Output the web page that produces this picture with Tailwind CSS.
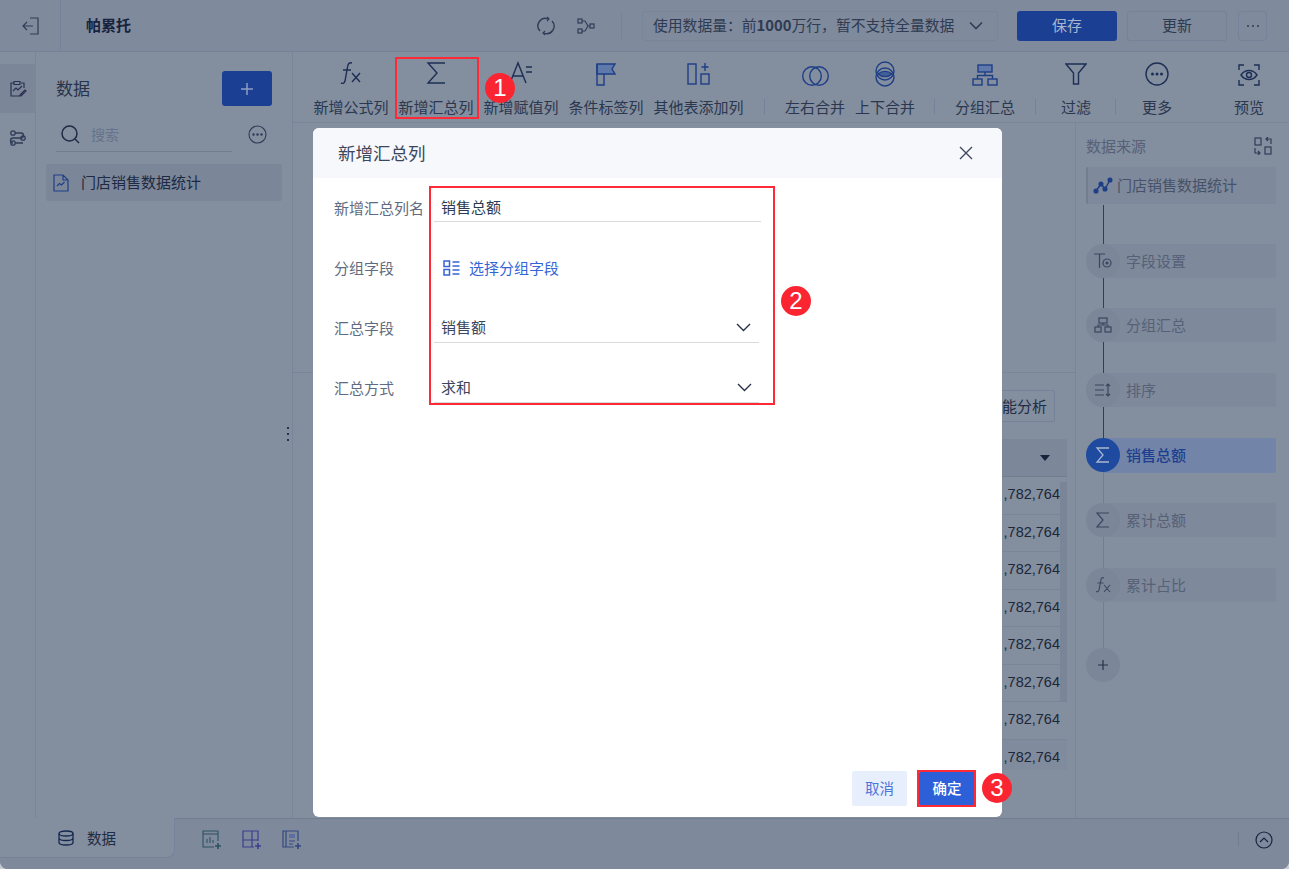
<!DOCTYPE html>
<html lang="zh">
<head>
<meta charset="utf-8">
<script src="https://cdn.jsdelivr.net/npm/@tailwindcss/browser@4"></script>
</head>
<body class="bg-[#c5cad3]">
<div class="relative w-[1289px] h-[869px] overflow-hidden rounded-b-[8px] bg-[#838e9f] font-['Noto_Sans_CJK_SC','Liberation_Sans',sans-serif] text-[15px] text-[#2c3a52] flex flex-col">

  <!-- header -->
  <header class="h-[52px] shrink-0 flex items-center bg-[#7f8a9c] border-b border-[#76819a]">
    <div class="w-[61px] h-full flex items-center justify-center border-r border-[#76819a] pl-[1px]">
      <svg width="18" height="20" viewBox="0 0 18 20" fill="none" stroke="#2f3d57" stroke-width="1.2"><path d="M8 2h8v16H8M11 10H1M5 6l-4 4 4 4"/></svg>
    </div>
    <div class="ml-[25px] w-[45px] text-[15px] font-bold text-[#17233d] whitespace-nowrap">帕累托</div>
    <svg class="ml-[405px]" width="20" height="20" viewBox="0 0 20 20" fill="none" stroke="#2f3d57" stroke-width="1.4"><path d="M4 15A7.5 7.5 0 0 1 12 2.8M16 5a7.5 7.5 0 0 1-8 12.2"/><path d="M11 1l2 2-2 2M9 15l-2 2 2 2" stroke-width="1.2"/></svg>
    <svg class="ml-[21px]" width="18" height="18" viewBox="0 0 18 18" fill="none" stroke="#2f3d57" stroke-width="1.2"><rect x="1" y="2" width="4" height="4"/><rect x="1" y="12" width="4" height="4"/><rect x="13" y="7" width="4" height="4"/><path d="M5 4h3l3 5h2M5 14h3l3-5"/></svg>
    <div class="ml-[26px] w-px h-[26px] bg-[#76819a]"></div>
    <div class="ml-[20px] w-[356px] h-[30px] flex items-center justify-between pl-[10px] pr-[13px] rounded-[3px] border border-[#7a859a] text-[14.800px] text-[#2f3b52] whitespace-nowrap">
      <span>使用数据量：前<b class="font-bold">1000</b>万行，暂不支持全量数据</span>
      <svg width="16" height="10" viewBox="0 0 16 10" fill="none" stroke="#2f3d57" stroke-width="1.6"><path d="M2 1.500l6 6 6-6"/></svg>
    </div>
    <div class="ml-[19px] w-[100px] h-[30px] flex items-center justify-center rounded-[3px] bg-[#1b3f93] text-[#a9b6cf]">保存</div>
    <div class="ml-[10px] w-[100px] h-[30px] flex items-center justify-center rounded-[3px] border border-[#76819a] text-[#2c3a52]">更新</div>
    <div class="ml-[11px] w-[29px] h-[30px] flex items-center justify-center rounded-[4px] border border-[#76819a] text-[#2f3d57]">
      <svg width="16" height="4" viewBox="0 0 16 4" fill="#2f3d57"><circle cx="3" cy="2" r="1"/><circle cx="8" cy="2" r="1"/><circle cx="13" cy="2" r="1"/></svg>
    </div>
  </header>

  <!-- middle -->
  <div class="h-[766px] shrink-0 flex">
    <!-- rail -->
    <nav class="w-[36px] shrink-0 border-r border-[#7a859a] pt-[12px]">
      <div class="h-[49px] flex items-center justify-center bg-[#7b8698]">
        <svg width="18" height="18" viewBox="0 0 18 18" fill="none" stroke="#2b2f52" stroke-width="1.2"><path d="M5 3H2v13h9M12 3h3v5M5 1.500h6v3H5zM4 11l3-3 2 2 4-4M11 15l5-5 1 1-5 5h-1z"/></svg>
      </div>
      <div class="h-[50px] flex items-center justify-center">
        <svg width="18" height="18" viewBox="0 0 18 18" fill="none" stroke="#2f3d57" stroke-width="1.3"><circle cx="4" cy="4" r="2.2"/><circle cx="14" cy="9" r="2.2"/><circle cx="4" cy="14" r="2.2"/><path d="M6 4h6a2.500 2.500 0 0 1 0 5H4a2.500 2.500 0 0 0 0 5M6.200 14H14"/></svg>
      </div>
    </nav>
    <!-- data panel -->
    <aside class="relative w-[257px] shrink-0 border-r border-[#7a859a]">
      <div class="flex items-center justify-between pl-[20px] pr-[20px] pt-[19px] h-[54px]">
        <span class="text-[17px] text-[#273349] -translate-y-px">数据</span>
        <div class="w-[50px] h-[35px] rounded-[3px] bg-[#1b3f93] flex items-center justify-center">
          <svg width="14" height="14" viewBox="0 0 14 14" stroke="#8f9fc2" stroke-width="1.5"><path d="M7 1v12M1 7h12"/></svg>
        </div>
      </div>
      <div class="flex items-center pl-[24px] mt-[14px] h-[28px]">
        <svg width="20" height="20" viewBox="0 0 20 20" fill="none" stroke="#1f2c44" stroke-width="1.5"><circle cx="9.500" cy="9.500" r="7.500"/><path d="M15 15l4 4"/></svg>
        <span class="ml-[11px] text-[14px] text-[#67738a]">搜索</span>
        <svg class="ml-[129px]" width="19" height="19" viewBox="0 0 19 19" fill="none" stroke="#2f3d57" stroke-width="1.1"><circle cx="9.500" cy="9.500" r="8.500"/><circle cx="5.500" cy="9.500" r=".7" fill="#2f3d57"/><circle cx="9.500" cy="9.500" r=".7" fill="#2f3d57"/><circle cx="13.500" cy="9.500" r=".7" fill="#2f3d57"/></svg>
      </div>
      <div class="ml-[20px] mt-[3px] w-[176px] h-px bg-[#727d90]"></div>
      <div class="ml-[10px] mt-[12px] w-[236px] h-[37px] rounded-[2px] bg-[#7b8698] flex items-center pl-[7px]">
        <svg width="16" height="18" viewBox="0 0 16 18" fill="none" stroke="#1e3f86" stroke-width="1.2"><path d="M1 1h9l5 5v11H1zM10 1v5h5"/><path d="M4 12l2.500-2.500 2 1.500 3-3"/></svg>
        <span class="ml-[12px] text-[#1c2a44]">门店销售数据统计</span>
      </div>
      <div class="absolute right-[3px] top-[375px] flex flex-col gap-[4px]">
        <i class="block w-[2px] h-[2px] bg-[#26334b]"></i><i class="block w-[2px] h-[2px] bg-[#26334b]"></i><i class="block w-[2px] h-[2px] bg-[#26334b]"></i>
      </div>
    </aside>
    <!-- main -->
    <main class="flex-1 flex flex-col min-w-0">
      <div class="h-[71px] shrink-0 border-b border-[#7a859a] flex items-start pl-[21px] whitespace-nowrap text-[#2a374e]">
        <div class="w-[74px] flex flex-col items-center mr-[11px]"><div class="h-[34px] flex items-end justify-center"><svg width="26" height="26" viewBox="0 0 26 26" fill="none" stroke="#1e2f55" stroke-width="1.4"><path d="M14 3c-3-1-4 1-4.500 4L7 21c-.5 2-2 3-4 2M5 10h8M14 13l8 9M22 13l-8 9"/></svg></div><span class="mt-[10px] leading-[22px]">新增公式列</span></div>
        <div class="w-[74px] flex flex-col items-center mr-[11px]"><div class="h-[34px] flex items-end justify-center"><svg width="22" height="26" viewBox="0 0 22 26" fill="none" stroke="#1e2f55" stroke-width="1.4"><path d="M20 3H3l9 10-9 10h17"/></svg></div><span class="mt-[10px] leading-[22px]">新增汇总列</span></div>
        <div class="w-[74px] flex flex-col items-center mr-[11px]"><div class="h-[34px] flex items-end justify-center"><svg width="26" height="26" viewBox="0 0 26 26" fill="none" stroke="#1e2f55" stroke-width="1.4"><path d="M2 23L10 3l8 20M5 16h10M18 7h6M18 12h6"/></svg></div><span class="mt-[10px] leading-[22px]">新增赋值列</span></div>
        <div class="w-[74px] flex flex-col items-center mr-[11px]"><div class="h-[34px] flex items-end justify-center"><svg width="24" height="24" viewBox="0 0 24 24" fill="none" stroke="#1e3f86" stroke-width="1.4"><path d="M3 2h18l-3 5 3 5H3z" fill="#5f79ab"/><path d="M3 2v21h7V12"/></svg></div><span class="mt-[10px] leading-[22px]">条件标签列</span></div>
        <div class="w-[89px] flex flex-col items-center"><div class="h-[34px] flex items-end justify-center"><svg width="24" height="24" viewBox="0 0 24 24" fill="none" stroke="#1e3f86" stroke-width="1.4"><rect x="1" y="2" width="8" height="20"/><rect x="14" y="12" width="8" height="10"/><path d="M18 1v8M14.500 5h7"/></svg></div><span class="mt-[10px] leading-[22px]">其他表添加列</span></div>
        <div class="ml-[21px] mt-[47px] w-px h-[16px] bg-[#76819a]"></div>
        <div class="ml-[20px] w-[60px] flex flex-col items-center"><div class="h-[34px] flex items-end justify-center"><svg class="mb-[-1px]" width="27" height="22" viewBox="0 0 27 22" fill="none" stroke="#1e3f86" stroke-width="1.4"><circle cx="10" cy="11" r="9.300"/><circle cx="17" cy="11" r="9.300"/></svg></div><span class="mt-[10px] leading-[22px]">左右合并</span></div>
        <div class="ml-[10px] w-[60px] flex flex-col items-center"><div class="h-[34px] flex items-end justify-center"><svg class="mb-[-1px]" width="20" height="26" viewBox="0 0 20 26" fill="none" stroke="#1e3f86" stroke-width="1.4"><circle cx="10" cy="10" r="9"/><circle cx="10" cy="16" r="9"/><path d="M3 13c4-3.500 10-3.500 14 0-4 3.500-10 3.500-14 0z" fill="#456099"/></svg></div><span class="mt-[10px] leading-[22px]">上下合并</span></div>
        <div class="ml-[19px] mt-[47px] w-px h-[16px] bg-[#76819a]"></div>
        <div class="ml-[20px] w-[60px] flex flex-col items-center"><div class="h-[34px] flex items-end justify-center"><svg width="26" height="22" viewBox="0 0 26 22" fill="none" stroke="#1e3f86" stroke-width="1.4"><rect x="6" y="1" width="14" height="7" fill="#5f79ab"/><rect x="1" y="15" width="9" height="6"/><rect x="16" y="15" width="9" height="6"/><path d="M13 8v3.500M5.500 15v-3.500h15V15"/></svg></div><span class="mt-[10px] leading-[22px]">分组汇总</span></div>
        <div class="ml-[20px] mt-[47px] w-px h-[16px] bg-[#76819a]"></div>
        <div class="ml-[25px] w-[30px] flex flex-col items-center"><div class="h-[34px] flex items-end justify-center"><svg width="22" height="24" viewBox="0 0 22 24" fill="none" stroke="#1e2f55" stroke-width="1.4"><path d="M1 2h20l-7.500 9v11h-5V11z"/></svg></div><span class="mt-[10px] leading-[22px]">过滤</span></div>
        <div class="ml-[24px] mt-[47px] w-px h-[16px] bg-[#76819a]"></div>
        <div class="ml-[26px] w-[30px] flex flex-col items-center"><div class="h-[34px] flex items-end justify-center"><svg width="24" height="24" viewBox="0 0 24 24" fill="none" stroke="#1e2f55" stroke-width="1.4"><circle cx="12" cy="12" r="11"/><circle cx="7.500" cy="12" r=".8" fill="#1e2f55"/><circle cx="12" cy="12" r=".8" fill="#1e2f55"/><circle cx="16.500" cy="12" r=".8" fill="#1e2f55"/></svg></div><span class="mt-[10px] leading-[22px]">更多</span></div>
        <div class="ml-[62px] w-[30px] flex flex-col items-center"><div class="h-[34px] flex items-end justify-center"><svg width="22" height="22" viewBox="0 0 22 22" fill="none" stroke="#1e2f55" stroke-width="1.4"><path d="M1 6V1h5M16 1h5v5M21 16v5h-5M6 21H1v-5M3 11c4-6 12-6 16 0-4 6-12 6-16 0z"/><circle cx="11" cy="11" r="2.500"/></svg></div><span class="mt-[10px] leading-[22px]">预览</span></div>
      </div>

      <div class="flex-1 flex min-h-0">
        <!-- centre, mostly behind the dialog -->
        <section class="w-[783px] shrink-0 border-r border-[#7a859a] flex flex-col">
          <div class="h-[250px] shrink-0 border-b border-[#7a859a]"></div>
          <div class="h-[66px] shrink-0 flex items-start justify-end pr-[20px] pt-[17px]">
            <div class="w-[90px] h-[32px] flex items-center justify-end pr-[7px] rounded-[2px] border border-[#76819a] text-[#1f2c44]">智能分析</div>
          </div>
          <div class="ml-[100px] mr-[8px] text-[14.500px] font-['Liberation_Sans',sans-serif] text-[#1c2738]">
            <div class="h-[38px] bg-[#7c8799] flex items-center justify-end pr-[17px] border-b border-[#727d90]">
              <svg width="10" height="6" viewBox="0 0 10 6" fill="#17233d"><path d="M0 0h10L5 6z"/></svg>
            </div>
            <div class="relative">
              <div class="h-[37.500px] flex items-center justify-end pr-[7px] border-b border-[#7a859a]">,782,764</div>
              <div class="h-[37.500px] flex items-center justify-end pr-[7px] border-b border-[#7a859a]">,782,764</div>
              <div class="h-[37.500px] flex items-center justify-end pr-[7px] border-b border-[#7a859a]">,782,764</div>
              <div class="h-[37.500px] flex items-center justify-end pr-[7px] border-b border-[#7a859a]">,782,764</div>
              <div class="h-[37.500px] flex items-center justify-end pr-[7px] border-b border-[#7a859a]">,782,764</div>
              <div class="h-[37.500px] flex items-center justify-end pr-[7px] border-b border-[#7a859a]">,782,764</div>
              <div class="h-[37.500px] flex items-center justify-end pr-[7px] border-b border-[#7a859a]">,782,764</div>
              <div class="h-[30px] flex items-center justify-end pr-[7px] pt-[7px] bg-[#808b9d]">,782,764</div>
              <div class="absolute right-0 top-[5px] w-[7px] h-[220px] bg-[#7a8598]"></div>
            </div>
          </div>
        </section>

        <!-- pipeline -->
        <aside class="relative flex-1 pl-[10px] pr-[13px]">
          <div class="absolute left-[27px] top-[82px] w-px h-[235px] bg-[#1e3f86]"></div>
          <div class="absolute left-[27px] top-[350px] w-px h-[190px] bg-[#727d90]"></div>
          <div class="h-[37px] flex items-end justify-between pb-[3px] pr-[4px] text-[#566177]">
            <span>数据来源</span>
            <svg class="mb-[2px]" width="18" height="18" viewBox="0 0 18 18" fill="none" stroke="#2f3d57" stroke-width="1.200"><rect x="1" y="1" width="6" height="7"/><rect x="11" y="10" width="6" height="7"/><path d="M1 11v5h5M4 14l2 2-2 2M17 7V2h-5M14 4l-2-2 2-2"/></svg>
          </div>
          <div class="relative mt-[7px] h-[37px] rounded-[2px] bg-[#7e899b] border-l-2 border-[#727d90] flex items-center pl-[5px] text-[#465269]">
            <svg width="20" height="18" viewBox="0 0 20 18" fill="#1e3f86" stroke="#1e3f86" stroke-width="1.500"><path d="M3 14l5-7 4 5 5-9" fill="none"/><circle cx="3" cy="14" r="1.800"/><circle cx="8" cy="7" r="1.800"/><circle cx="12" cy="12" r="1.800"/><circle cx="17" cy="3" r="1.800"/></svg>
            <span class="ml-[4px]">门店销售数据统计</span>
          </div>
          <div class="relative mt-[40px] h-[34px] ml-[17px] rounded-r-[2px] bg-[#7e899b] flex items-center pl-[23px] text-[#566177]">
            <span class="absolute left-[-17px] top-[0px] w-[34px] h-[34px] rounded-full bg-[#7b8698] flex items-center justify-center">
              <svg width="20" height="18" viewBox="0 0 20 18" fill="none" stroke="#3a4660" stroke-width="1.200"><path d="M1 2h11M6.500 2v14"/><circle cx="14" cy="11" r="4"/><circle cx="14" cy="11" r="1" fill="#3a4660"/></svg>
            </span>字段设置
          </div>
          <div class="relative mt-[30px] h-[34px] ml-[17px] rounded-r-[2px] bg-[#7e899b] flex items-center pl-[23px] text-[#566177]">
            <span class="absolute left-[-17px] top-[0px] w-[34px] h-[34px] rounded-full bg-[#7b8698] flex items-center justify-center">
              <svg width="18" height="16" viewBox="0 0 18 16" fill="none" stroke="#3a4660" stroke-width="1.200"><rect x="5" y="1" width="8" height="5"/><rect x="1" y="10" width="6" height="5"/><rect x="11" y="10" width="6" height="5"/><path d="M9 6v2M4 10V8h10v2"/></svg>
            </span>分组汇总
          </div>
          <div class="relative mt-[31px] h-[34px] ml-[17px] rounded-r-[2px] bg-[#7e899b] flex items-center pl-[23px] text-[#566177]">
            <span class="absolute left-[-17px] top-[0px] w-[34px] h-[34px] rounded-full bg-[#7b8698] flex items-center justify-center">
              <svg width="18" height="14" viewBox="0 0 18 14" fill="none" stroke="#3a4660" stroke-width="1.200"><path d="M1 2h9M1 7h9M1 12h9M14 1v12M12 3l2-2 2 2M12 11l2 2 2-2"/></svg>
            </span>排序
          </div>
          <div class="relative mt-[31px] h-[35px] ml-[17px] rounded-r-[2px] bg-[#7285a8] flex items-center pl-[23px] font-medium text-[#1e3f8f]">
            <span class="absolute left-[-17px] top-[0px] w-[34px] h-[34px] rounded-full bg-[#1e4a9f] flex items-center justify-center">
              <svg width="16" height="18" viewBox="0 0 16 18" fill="none" stroke="#aab6cf" stroke-width="1.300"><path d="M14 2H2l6 7-6 7h12"/></svg>
            </span>销售总额
          </div>
          <div class="relative mt-[30px] h-[34px] ml-[17px] rounded-r-[2px] bg-[#7e899b] flex items-center pl-[23px] text-[#566177]">
            <span class="absolute left-[-17px] top-[0px] w-[34px] h-[34px] rounded-full bg-[#7b8698] flex items-center justify-center">
              <svg width="16" height="18" viewBox="0 0 16 18" fill="none" stroke="#3a4660" stroke-width="1.200"><path d="M14 2H2l6 7-6 7h12"/></svg>
            </span>累计总额
          </div>
          <div class="relative mt-[31px] h-[34px] ml-[17px] rounded-r-[2px] bg-[#7e899b] flex items-center pl-[23px] text-[#566177]">
            <span class="absolute left-[-17px] top-[0px] w-[34px] h-[34px] rounded-full bg-[#7b8698] flex items-center justify-center">
              <svg width="18" height="18" viewBox="0 0 18 18" fill="none" stroke="#3a4660" stroke-width="1.100"><path d="M10 2c-2-1-3 .5-3.300 3L5 14c-.3 1.500-1.500 2-3 1.500M3.500 7h6M10 9l6 7M16 9l-6 7"/></svg>
            </span>累计占比
          </div>
          <div class="relative mt-[46px] w-[34px] h-[34px] rounded-full bg-[#7b8698] flex items-center justify-center">
            <svg width="12" height="12" viewBox="0 0 12 12" stroke="#26334b" stroke-width="1.200"><path d="M6 1v10M1 6h10"/></svg>
          </div>
        </aside>
      </div>
    </main>
  </div>

  <!-- bottom bar -->
  <footer class="h-[51px] shrink-0 flex items-start bg-[#7e899b]">
    <div class="w-[175px] h-[40px] flex items-center justify-center rounded-br-[8px] bg-[#838e9f] border-b border-r border-[#76819a] text-[#1f2c44]">
      <svg width="16" height="16" viewBox="0 0 16 16" fill="none" stroke="#14284f" stroke-width="1.300"><ellipse cx="8" cy="3.500" rx="7" ry="2.500"/><path d="M1 3.500v9C1 14 4 15 8 15s7-1 7-2.500v-9M1 8c0 1.500 3 2.500 7 2.500S15 9.500 15 8"/></svg>
      <span class="ml-[13px] text-[14.500px]">数据</span>
    </div>
    <div class="flex-1 h-[51px] flex items-center border-t border-[#727d90] pl-[27px] pr-[16px] pb-[9px]">
      <svg width="20" height="20" viewBox="0 0 20 20" fill="none" stroke="#2d5063" stroke-width="1.100"><path d="M12 17H1V1h15v10M1 4h15M5 13V9M8 13V7M11 13v-3"/><path d="M13 16h6M16 13v6" stroke-width="1.600"/></svg>
      <svg class="ml-[20px]" width="20" height="20" viewBox="0 0 20 20" fill="none" stroke="#3b3f8f" stroke-width="1.200"><path d="M12 17H1V1h15v10M1 10h15M10 1v16"/><path d="M13 16h6M16 13v6" stroke-width="1.600"/></svg>
      <svg class="ml-[20px]" width="20" height="20" viewBox="0 0 20 20" fill="none" stroke="#34487f" stroke-width="1.200"><path d="M12 17H1V1h15v10M4 1v16M7 11h6M7 14h4"/><rect x="7" y="4" width="6" height="4" fill="#5c6f9f" stroke="none"/><path d="M13 16h6M16 13v6" stroke-width="1.600"/></svg>
      <div class="ml-auto w-px h-[15px] bg-[#727d90]"></div>
      <svg class="ml-[16px]" width="18" height="18" viewBox="0 0 18 18" fill="none" stroke="#13233f" stroke-width="1.200"><circle cx="9" cy="9" r="8"/><path d="M5 11l4-4 4 4"/></svg>
    </div>
  </footer>

  <!-- dialog -->
  <div class="absolute left-[313px] top-[128px] w-[689px] h-[689px] rounded-[6px] bg-white flex flex-col overflow-hidden">
    <div class="h-[50px] shrink-0 bg-[#f7f8fc] flex items-center justify-between pl-[25px] pr-[29px]">
      <span class="text-[17.500px] text-[#3a465c]">新增汇总列</span>
      <svg width="14" height="14" viewBox="0 0 14 14" stroke="#3f4a60" stroke-width="1.400"><path d="M1 1l12 12M13 1L1 13"/></svg>
    </div>
    <div class="flex-1">
      <div class="h-[60px] flex items-center pl-[21px]">
        <span class="w-[100px] shrink-0 text-[#5f6b80]">新增汇总列名</span>
        <div class="w-[327px] h-[28px] flex items-center pl-[7px] border-b border-[#d8dade] text-[#2c3a52]">销售总额</div>
      </div>
      <div class="h-[60px] flex items-center pl-[21px]">
        <span class="w-[108px] shrink-0 text-[#5f6b80]">分组字段</span>
        <svg class="ml-[1px]" width="17" height="16" viewBox="0 0 17 16" fill="none" stroke="#3564d6" stroke-width="1.500"><rect x="1" y="1" width="5.500" height="5.500"/><rect x="1" y="9.500" width="5.500" height="5.500"/><path d="M9.500 2h7M9.500 6h7M9.500 10h7M9.500 14h7"/></svg>
        <span class="ml-[9px] text-[15px] text-[#3564d6]">选择分组字段</span>
      </div>
      <div class="h-[60px] flex items-center pl-[21px]">
        <span class="w-[100px] shrink-0 text-[#5f6b80]">汇总字段</span>
        <div class="w-[325px] h-[30px] flex items-center justify-between pl-[7px] pr-[8px] border-b border-[#d8dade] text-[#3a465c]">销售额<svg width="15" height="9" viewBox="0 0 15 9" fill="none" stroke="#27324a" stroke-width="1.400"><path d="M1 1l6.500 6.500L14 1"/></svg></div>
      </div>
      <div class="h-[60px] flex items-center pl-[21px]">
        <span class="w-[100px] shrink-0 text-[#5f6b80]">汇总方式</span>
        <div class="w-[325px] h-[30px] flex items-center justify-between pl-[7px] pr-[7px] border-b border-[#d8dade] text-[#3a465c]">求和<svg width="15" height="9" viewBox="0 0 15 9" fill="none" stroke="#27324a" stroke-width="1.400"><path d="M1 1l6.500 6.500L14 1"/></svg></div>
      </div>
    </div>
    <div class="h-[46px] shrink-0 flex justify-end gap-[12px] pr-[27px]">
      <div class="w-[55px] h-[35px] pb-[2px] rounded-[2px] bg-[#e7effd] flex items-center justify-center text-[14.500px] text-[#4d74d8]">取消</div>
      <div class="w-[56px] h-[35px] pb-[2px] rounded-[2px] bg-[#2c5fd8] flex items-center justify-center text-[14.500px] font-medium text-white">确定</div>
    </div>
  </div>

  <!-- annotations -->
  <div class="absolute left-[395px] top-[57px] w-[84px] h-[62px] border-2 border-[#ff2a36]"></div>
  <div class="absolute left-[429px] top-[186px] w-[346px] h-[219px] border-2 border-[#ff2a36]"></div>
  <div class="absolute left-[917px] top-[770px] w-[59px] h-[37px] border-2 border-[#ff2a36]"></div>
  <div class="absolute left-[485px] top-[73px] w-[30px] h-[30px] rounded-full bg-[#fb2531] flex items-center justify-center text-[24px] font-['Liberation_Sans',sans-serif] text-white">1</div>
  <div class="absolute left-[781px] top-[286px] w-[30px] h-[30px] rounded-full bg-[#fb2531] flex items-center justify-center text-[24px] font-['Liberation_Sans',sans-serif] text-white">2</div>
  <div class="absolute left-[982px] top-[773px] w-[30px] h-[30px] rounded-full bg-[#fb2531] flex items-center justify-center text-[24px] font-['Liberation_Sans',sans-serif] text-white">3</div>
</div>
</body>
</html>
